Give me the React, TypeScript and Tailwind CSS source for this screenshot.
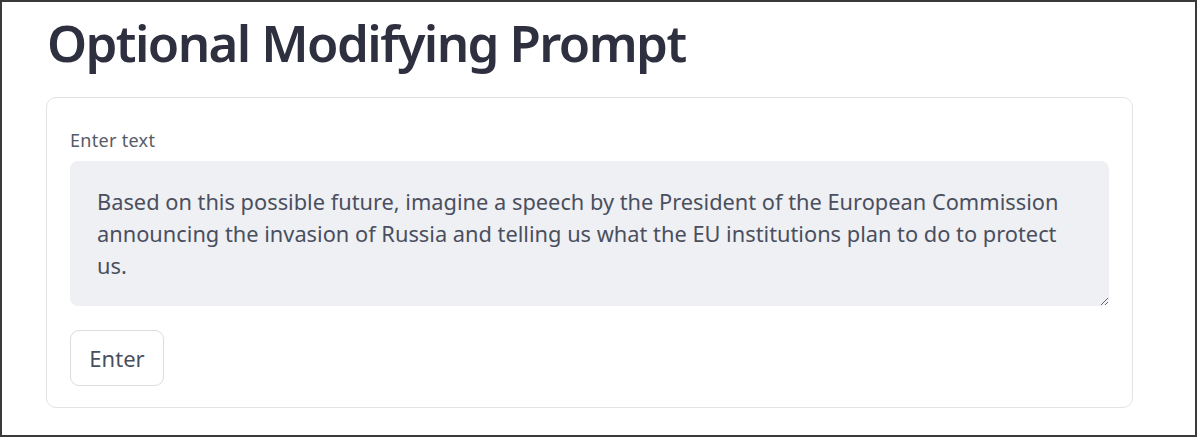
export default function App() {
  const prompt =
    "Based on this possible future, imagine a speech by the President of the European Commission announcing the invasion of Russia and telling us what the EU institutions plan to do to protect us.";

  return (
    <div
      className="box-border h-[437px] w-[1197px] overflow-hidden border-2 border-[#3a3a3a] bg-white"
      style={{ fontFamily: '"Noto Sans", "Open Sans", sans-serif' }}
    >
      <h1 className="pl-[45px] pt-[8px] text-[51px] font-semibold leading-[64px] tracking-[-1.6px] text-[#2e3040]">
        Optional Modifying Prompt
      </h1>

      <div className="ml-[44px] mt-[23px] w-[1087px] rounded-[10px] border border-[#e3e3e6] px-[23px] pb-[21px] pt-[30px]">
        <label className="block text-[18px] leading-[24px] tracking-[0.3px] text-[#555b68]">
          Enter text
        </label>
        <textarea
          defaultValue={prompt}
          rows={3}
          className="mt-[9px] block h-[145px] w-full rounded-[8px] bg-[#eff0f4] pl-[27px] pr-[26px] pt-[25px] text-[21.8px] leading-[32px] text-[#4a4f5e] outline-none"
        />
        <button
          type="button"
          className="mt-[24px] h-[56px] w-[94px] rounded-[9px] border border-[#dcdde1] bg-white text-[22px] text-[#4a4f5e]"
        >
          Enter
        </button>
      </div>
    </div>
  );
}
